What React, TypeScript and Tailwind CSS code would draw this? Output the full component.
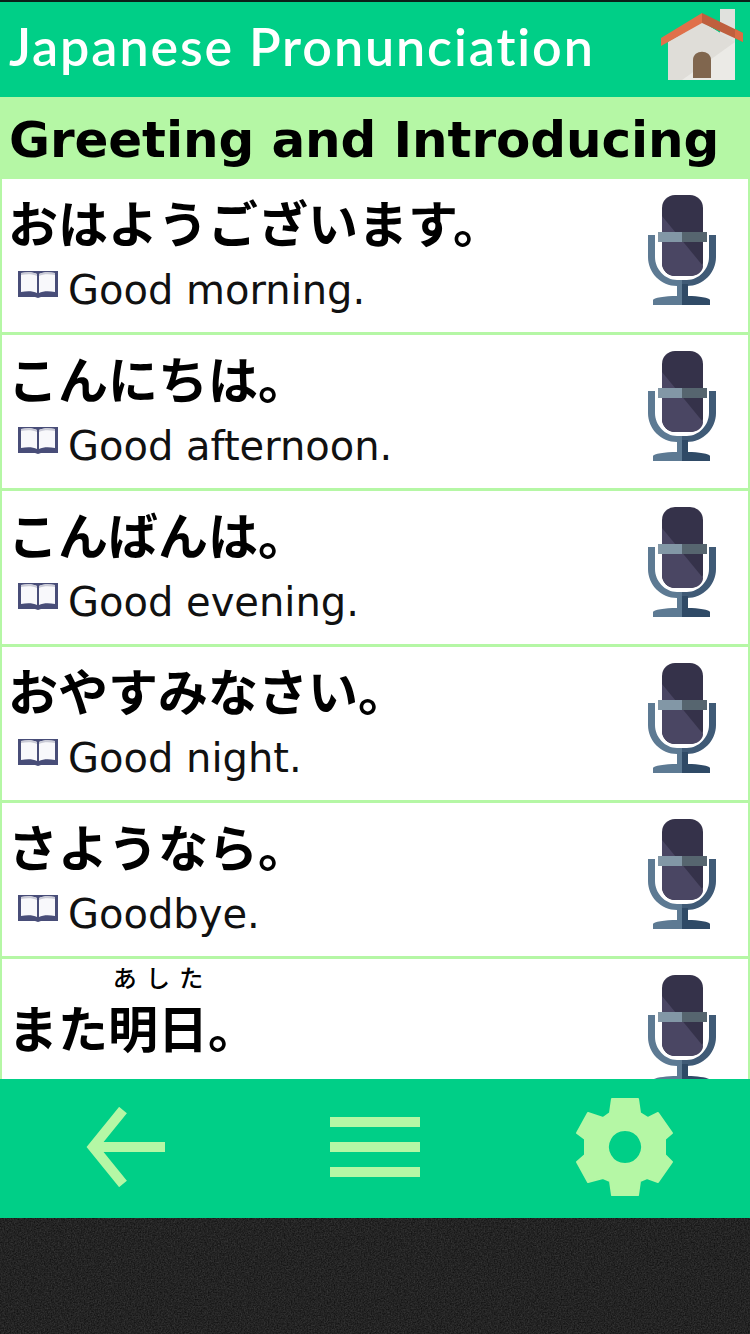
const ROWS = [
  { jp: "おはようございます。", en: "Good morning." },
  { jp: "こんにちは。", en: "Good afternoon." },
  { jp: "こんばんは。", en: "Good evening." },
  { jp: "おやすみなさい。", en: "Good night." },
  { jp: "さようなら。", en: "Goodbye." },
];

function HomeIcon() {
  return (
    <svg width="86" height="74" viewBox="660 8 86 74" className="mb-[9px] shrink-0">
      <path d="M720 9h15v71h-15z" fill="#e0e1dd" />
      <path d="M668 80V42l34-20 33 20v38z" fill="#ebeae6" />
      <path d="M668 80V42l34-20 33 20L682 80z" fill="#dfddd8" />
      <path d="M693 78V60c0-11 18-11 18 0v18z" fill="#80664e" />
      <path d="M661 38 702 13v10l-41 23z" fill="#e0704a" />
      <path d="M702 13l41 20v9l-41-19z" fill="#bf5f3e" />
      <path d="M735 29l8 4v9l-8-4z" fill="#d96c44" />
    </svg>
  );
}

function BookIcon() {
  return (
    <svg width="40" height="28" viewBox="0 0 40 28" className="shrink-0">
      <path d="M0 1h40v26H23l-3 1-3-1H0z" fill="#484d78" />
      <path d="M3 3c6-1 12-1 16 1v19c-4-2-10-2-16-1zM37 3c-6-1-12-1-16 1v19c4-2 10-2 16-1z" fill="#f8f8fb" />
      <path d="M3 3c6-1 12-1 16 1v2C15 4 9 4 3 5zM37 3c-6-1-12-1-16 1v2c4-2 10-2 16-1z" fill="#c9cad6" />
    </svg>
  );
}

function MicIcon() {
  return (
    <svg width="70" height="112" viewBox="0 0 70 112" className="shrink-0">
      <rect x="15" y="1" width="41" height="81" rx="13" fill="#35324a" />
      <path d="M15 22 56 72c0 6-6 10-13 10H28c-7 0-13-6-13-13z" fill="#4a4663" />
      <path d="M1 41v22c0 16 13 29 29 29h5v-6h-5C18 86 8 75 8 63V41z" fill="#5d7a93" />
      <path d="M69 41v22c0 16-13 29-29 29h-5v-6h5c12 0 22-11 22-23V41z" fill="#3f5a76" />
      <path d="M30 90h5v13H30z" fill="#5d7a93" />
      <path d="M35 90h6v13h-6z" fill="#2f4a66" />
      <path d="M6 111v-5c0-2 12-4 24-4h5v9z" fill="#5d7a93" />
      <path d="M63 111v-5c0-2-12-4-22-4h-6v9z" fill="#2f4a66" />
      <path d="M11 38h24v10H11z" fill="#8297a6" />
      <path d="M35 38h25v10H35z" fill="#56656f" />
    </svg>
  );
}

function GearIcon() {
  return (
    <svg width="100" height="100" viewBox="0 0 100 100">
      <path
        fillRule="evenodd"
        stroke="#b5f7a5"
        strokeWidth="2"
        strokeLinejoin="round"
        fill="#b5f7a5"
        d="M37 2H63L65 16 73 21 83 16 97 36 90 42V58L97 65 83 85 72 81 65 84 63 98H37L35 84 28 81 13 85 2 65 10 58V42L2 36 13 16 28 21 35 16ZM50 33a17 17 0 1 0 .01 0Z"
      />
    </svg>
  );
}

function Row({ jp, en }: { jp: string; en: string }) {
  return (
    <div className="mb-[3px] flex h-[153px] shrink-0 justify-between bg-white pr-[31px] pl-[6px]">
      <div>
        <div className="text-[50px] leading-[84px] font-bold text-black">{jp}</div>
        <div className="flex items-start gap-[10px] pt-[5px] pl-[10px]">
          <div className="pt-[2px]">
            <BookIcon />
          </div>
          <span className="font-['DejaVu_Sans'] text-[40px] leading-[44px] text-[#111]">{en}</span>
        </div>
      </div>
      <div className="pt-[15px]">
        <MicIcon />
      </div>
    </div>
  );
}

export default function App() {
  return (
    <div className="flex h-[1334px] w-[750px] flex-col overflow-hidden bg-[#222] font-['Noto_Sans_CJK_JP',sans-serif]">
      <header className="flex h-[97px] shrink-0 items-center justify-between border-t-2 border-[#0b1f18] bg-[#00cf87] pr-[4px] pl-[9px]">
        <h1 className="mb-[8px] font-['Lato',sans-serif] text-[52px] font-semibold tracking-[1.9px] text-white">Japanese Pronunciation</h1>
        <HomeIcon />
      </header>

      <h2 className="h-[82px] shrink-0 bg-[#b5f7a5] pl-[9px] font-['DejaVu_Sans',sans-serif] text-[50px] leading-[86px] font-bold tracking-[-0.1px] text-black">
        Greeting and Introducing
      </h2>

      <main className="flex h-[900px] shrink-0 flex-col overflow-hidden border-x-2 border-[#b5f7a5] bg-[#b5f7a5]">
        {ROWS.map((r) => (
          <Row key={r.jp} jp={r.jp} en={r.en} />
        ))}
        <div className="flex h-[153px] shrink-0 justify-between bg-white pr-[31px] pl-[6px]">
          <div className="pt-[20px] text-[50px] leading-[76px] font-bold text-black">
            また
            <ruby>
              明日
              <rt className="pb-[10px] text-[24px] leading-[28px] font-medium">あした</rt>
            </ruby>
            。
          </div>
          <div className="pt-[15px]">
            <MicIcon />
          </div>
        </div>
      </main>

      <footer className="flex h-[139px] shrink-0 items-center bg-[#00cf87] pb-[4px]">
        <div className="flex flex-1 justify-center">
          <svg width="80" height="80" viewBox="0 0 80 80" fill="none" stroke="#b5f7a5" strokeWidth="10">
            <path d="M38 3 8 40l30 37M8 40h72" />
          </svg>
        </div>
        <div className="flex flex-1 flex-col items-center gap-[15px]">
          <div className="h-[10px] w-[90px] bg-[#b5f7a5]" />
          <div className="h-[10px] w-[90px] bg-[#b5f7a5]" />
          <div className="h-[10px] w-[90px] bg-[#b5f7a5]" />
        </div>
        <div className="flex flex-1 justify-center">
          <GearIcon />
        </div>
      </footer>

      {/* leather texture under the app */}
      <div className="flex-1 overflow-hidden bg-[#232323]">
        <svg width="750" height="116" className="block">
          <filter id="leather" colorInterpolationFilters="sRGB">
            <feTurbulence type="fractalNoise" baseFrequency="0.7" numOctaves="2" seed="4" />
            <feColorMatrix values="0.2 0 0 0 0.04 0.2 0 0 0 0.04 0.2 0 0 0 0.04 0 0 0 0 1" />
          </filter>
          <rect width="750" height="116" filter="url(#leather)" />
        </svg>
      </div>
    </div>
  );
}
